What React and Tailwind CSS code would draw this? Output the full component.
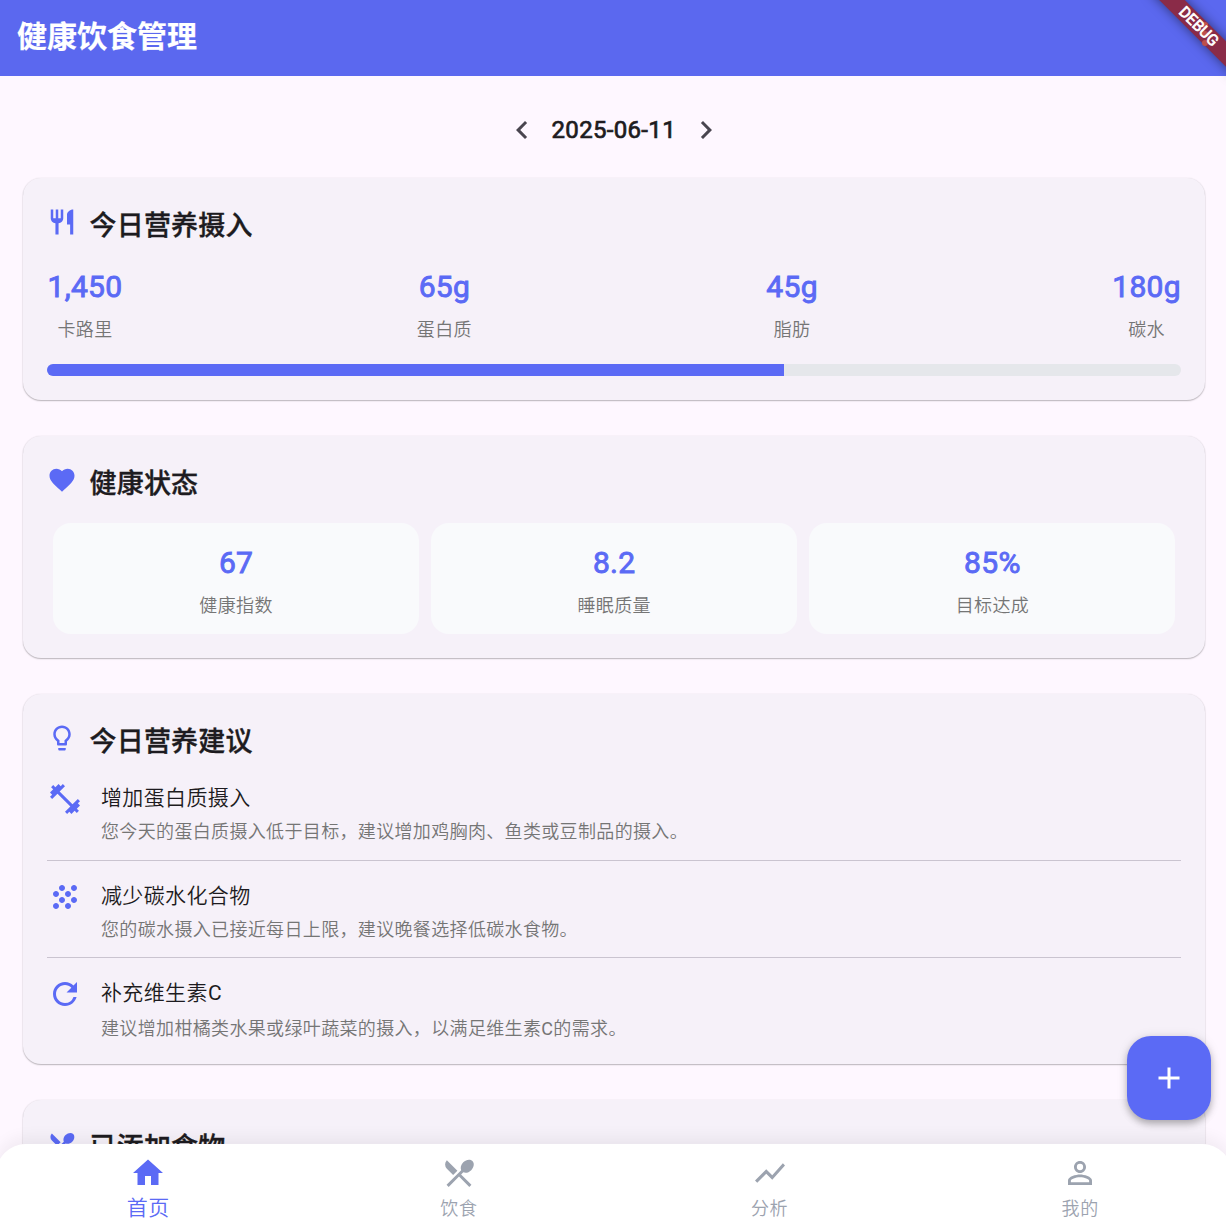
import {
  MdAdd, MdChevronLeft, MdChevronRight, MdFavorite, MdFitnessCenter, MdGrain, MdHome,
  MdLightbulbOutline, MdPersonOutline, MdRefresh, MdRestaurant, MdRestaurantMenu, MdShowChart,
} from 'react-icons/md';

const intake = [
  ['1,450', '卡路里'],
  ['65g', '蛋白质'],
  ['45g', '脂肪'],
  ['180g', '碳水'],
];

const health = [
  ['67', '健康指数'],
  ['8.2', '睡眠质量'],
  ['85%', '目标达成'],
];

const C = <span className="font-normal">C</span>;

const tips = [
  { id: 'protein', Icon: MdFitnessCenter, title: '增加蛋白质摄入', text: '您今天的蛋白质摄入低于目标，建议增加鸡胸肉、鱼类或豆制品的摄入。', box: 'h-[98px] border-b-[1.5px]', gap: 'mt-1' },
  { id: 'carbs', Icon: MdGrain, title: '减少碳水化合物', text: '您的碳水摄入已接近每日上限，建议晚餐选择低碳水食物。', box: 'h-[97.5px] border-b-[1.5px]', gap: 'mt-1' },
  { id: 'vitamin', Icon: MdRefresh, title: <>补充维生素{C}</>, text: <>建议增加柑橘类水果或绿叶蔬菜的摄入，以满足维生素{C}的需求。</>, box: 'h-[98px]', gap: 'mt-1.5' },
];

const tabs = [
  { Icon: MdHome, label: '首页', active: true },
  { Icon: MdRestaurantMenu, label: '饮食' },
  { Icon: MdShowChart, label: '分析' },
  { Icon: MdPersonOutline, label: '我的' },
];

function Card({ Icon, title, className, children }) {
  return (
    <section className={`mx-[22.5px] mb-9 shrink-0 rounded-[18px] bg-[#f6f1f9] px-6 pt-[24.5px] shadow-[0_1px_1.5px_rgba(0,0,0,0.26),0_0_1.5px_rgba(0,0,0,0.1)] ${className}`}>
      <div className="flex h-[42px] items-center gap-[13px]">
        <Icon className="-mt-1 size-[30px] text-[#5b6af5]" />
        <h2 className="mt-1 text-[27px] leading-[42px] font-medium tracking-[0.2px] text-[#1d1b20] [-webkit-text-stroke:0.35px_#1d1b20]">{title}</h2>
      </div>
      {children}
    </section>
  );
}

function Metric({ value, label }) {
  return (
    <div className="flex flex-col items-center pl-px">
      <span className="text-[30px] leading-9 font-normal tracking-[0.33px] text-[#5b6af5] [-webkit-text-stroke:0.9px_#5b6af5]">{value}</span>
      <span className="mt-[13px] text-[18px] leading-6 font-[350] tracking-[0.375px] text-[#757575]">{label}</span>
    </div>
  );
}

function DebugBanner() {
  return (
    <div className="absolute top-0 right-0 z-30 h-24 w-24 overflow-hidden">
      <div className="absolute top-[18px] left-[9px] h-[18px] w-[120px] rotate-45 bg-[#8a2b48] shadow-[0_0_12px_rgba(0,0,0,0.5)]" />
      <div className="absolute top-[22px] left-[72px] flex flex-col gap-[3px]">
        <i className="size-1.5 rounded-full bg-[#bd504c]" />
        <i className="size-1.5 rounded-full bg-[#bd504c]" />
        <i className="size-1.5 rounded-full bg-[#bd504c]" />
      </div>
      <div className="absolute top-[18px] left-[8px] flex h-[18px] w-[120px] rotate-45 items-center justify-center text-[15.3px] leading-none font-normal text-white [-webkit-text-stroke:0.7px_white]">
        DEBUG
      </div>
    </div>
  );
}

export default function App() {
  return (
    <div className="relative h-[1225px] w-[1226px] overflow-hidden bg-[#fef7ff] font-['Roboto','Noto_Sans_CJK_SC',sans-serif]">
      <div className="flex h-full w-[1227.5px] flex-col">
        <header className="flex h-[76px] shrink-0 items-center bg-[#5b68ef] pb-[3px] pl-[17px]">
          <h1 className="text-[30px] leading-10 font-bold text-white [-webkit-text-stroke:0.2px_white]">健康饮食管理</h1>
        </header>

        <main className="flex min-h-0 flex-1 flex-col overflow-hidden pt-9">
          <div className="mb-[30.4px] flex h-9 shrink-0 items-center justify-center text-[#49454f]">
            <MdChevronLeft className="size-9" />
            <span className="mx-3 text-[24px] leading-9 font-normal tracking-[0.32px] text-[#1d1b20] [-webkit-text-stroke:0.7px_#1d1b20]">2025-06-11</span>
            <MdChevronRight className="size-9" />
          </div>

          <Card Icon={MdRestaurant} title="今日营养摄入" className="h-[222px]">
            <div className="mt-6 flex justify-between">
              {intake.map(([value, label]) => <Metric key={label} value={value} label={label} />)}
            </div>
            <div className="mt-[22.5px] h-3 overflow-hidden rounded-full bg-[#e5e7eb]">
              <div className="h-full w-[65%] bg-[#5b6af5]" />
            </div>
          </Card>

          <Card Icon={MdFavorite} title="健康状态" className="h-[222px]">
            <div className="mx-1.5 mt-5 grid grid-cols-3 gap-3">
              {health.map(([value, label]) => (
                <div key={label} className="h-[111px] rounded-[18px] bg-[#f9fafc] pt-[22px]">
                  <Metric value={value} label={label} />
                </div>
              ))}
            </div>
          </Card>

          <Card Icon={MdLightbulbOutline} title="今日营养建议" className="h-[370px]">
            <div className="mt-[2px]">
              {tips.map(({ id, Icon, title, text, box, gap }) => (
                <div key={id} className={`flex gap-[18.5px] border-[#cac4d0] pt-2 ${box}`}>
                  <Icon className="mt-[10px] size-9 shrink-0 text-[#5b6af5]" />
                  <div className="pt-3">
                    <h3 className="text-[21px] leading-[30px] font-[350] tracking-[0.375px] text-[#1d1b20]">{title}</h3>
                    <p className={`text-[18px] leading-[30px] font-[350] tracking-[0.345px] text-[#757575] ${gap}`}>{text}</p>
                  </div>
                </div>
              ))}
            </div>
          </Card>

          <Card Icon={MdRestaurantMenu} title="已添加食物" className="h-[222px]" />
        </main>

        <nav className="z-10 -mx-1 h-[81px] shrink-0 rounded-t-[30px] bg-white pt-[11px] shadow-[0_-7px_15px_rgba(0,0,0,0.05)]">
          <div className="-mr-1 -ml-[3px] flex">
            {tabs.map(({ Icon, label, active }) => (
              <div key={label} className={`flex flex-1 flex-col items-center ${active ? 'text-[#5b6af5]' : 'text-[#9ca3af]'}`}>
                <Icon className="size-9" />
                <span className={active ? 'mt-0.5 text-[21px] leading-[30px] font-[350] tracking-[0.6px]' : 'mt-px text-[18px] leading-[34px] font-[350] tracking-[0.6px]'}>{label}</span>
              </div>
            ))}
          </div>
        </nav>
      </div>

      <DebugBanner />

      <button className="absolute top-[1036px] left-[1127px] z-20 flex size-[84px] items-center justify-center rounded-[24px] bg-[#5b6af5] text-white shadow-[0_4px_7px_rgba(0,0,0,0.25),0_1px_12px_rgba(0,0,0,0.1)]">
        <MdAdd className="size-9" />
      </button>
    </div>
  );
}
